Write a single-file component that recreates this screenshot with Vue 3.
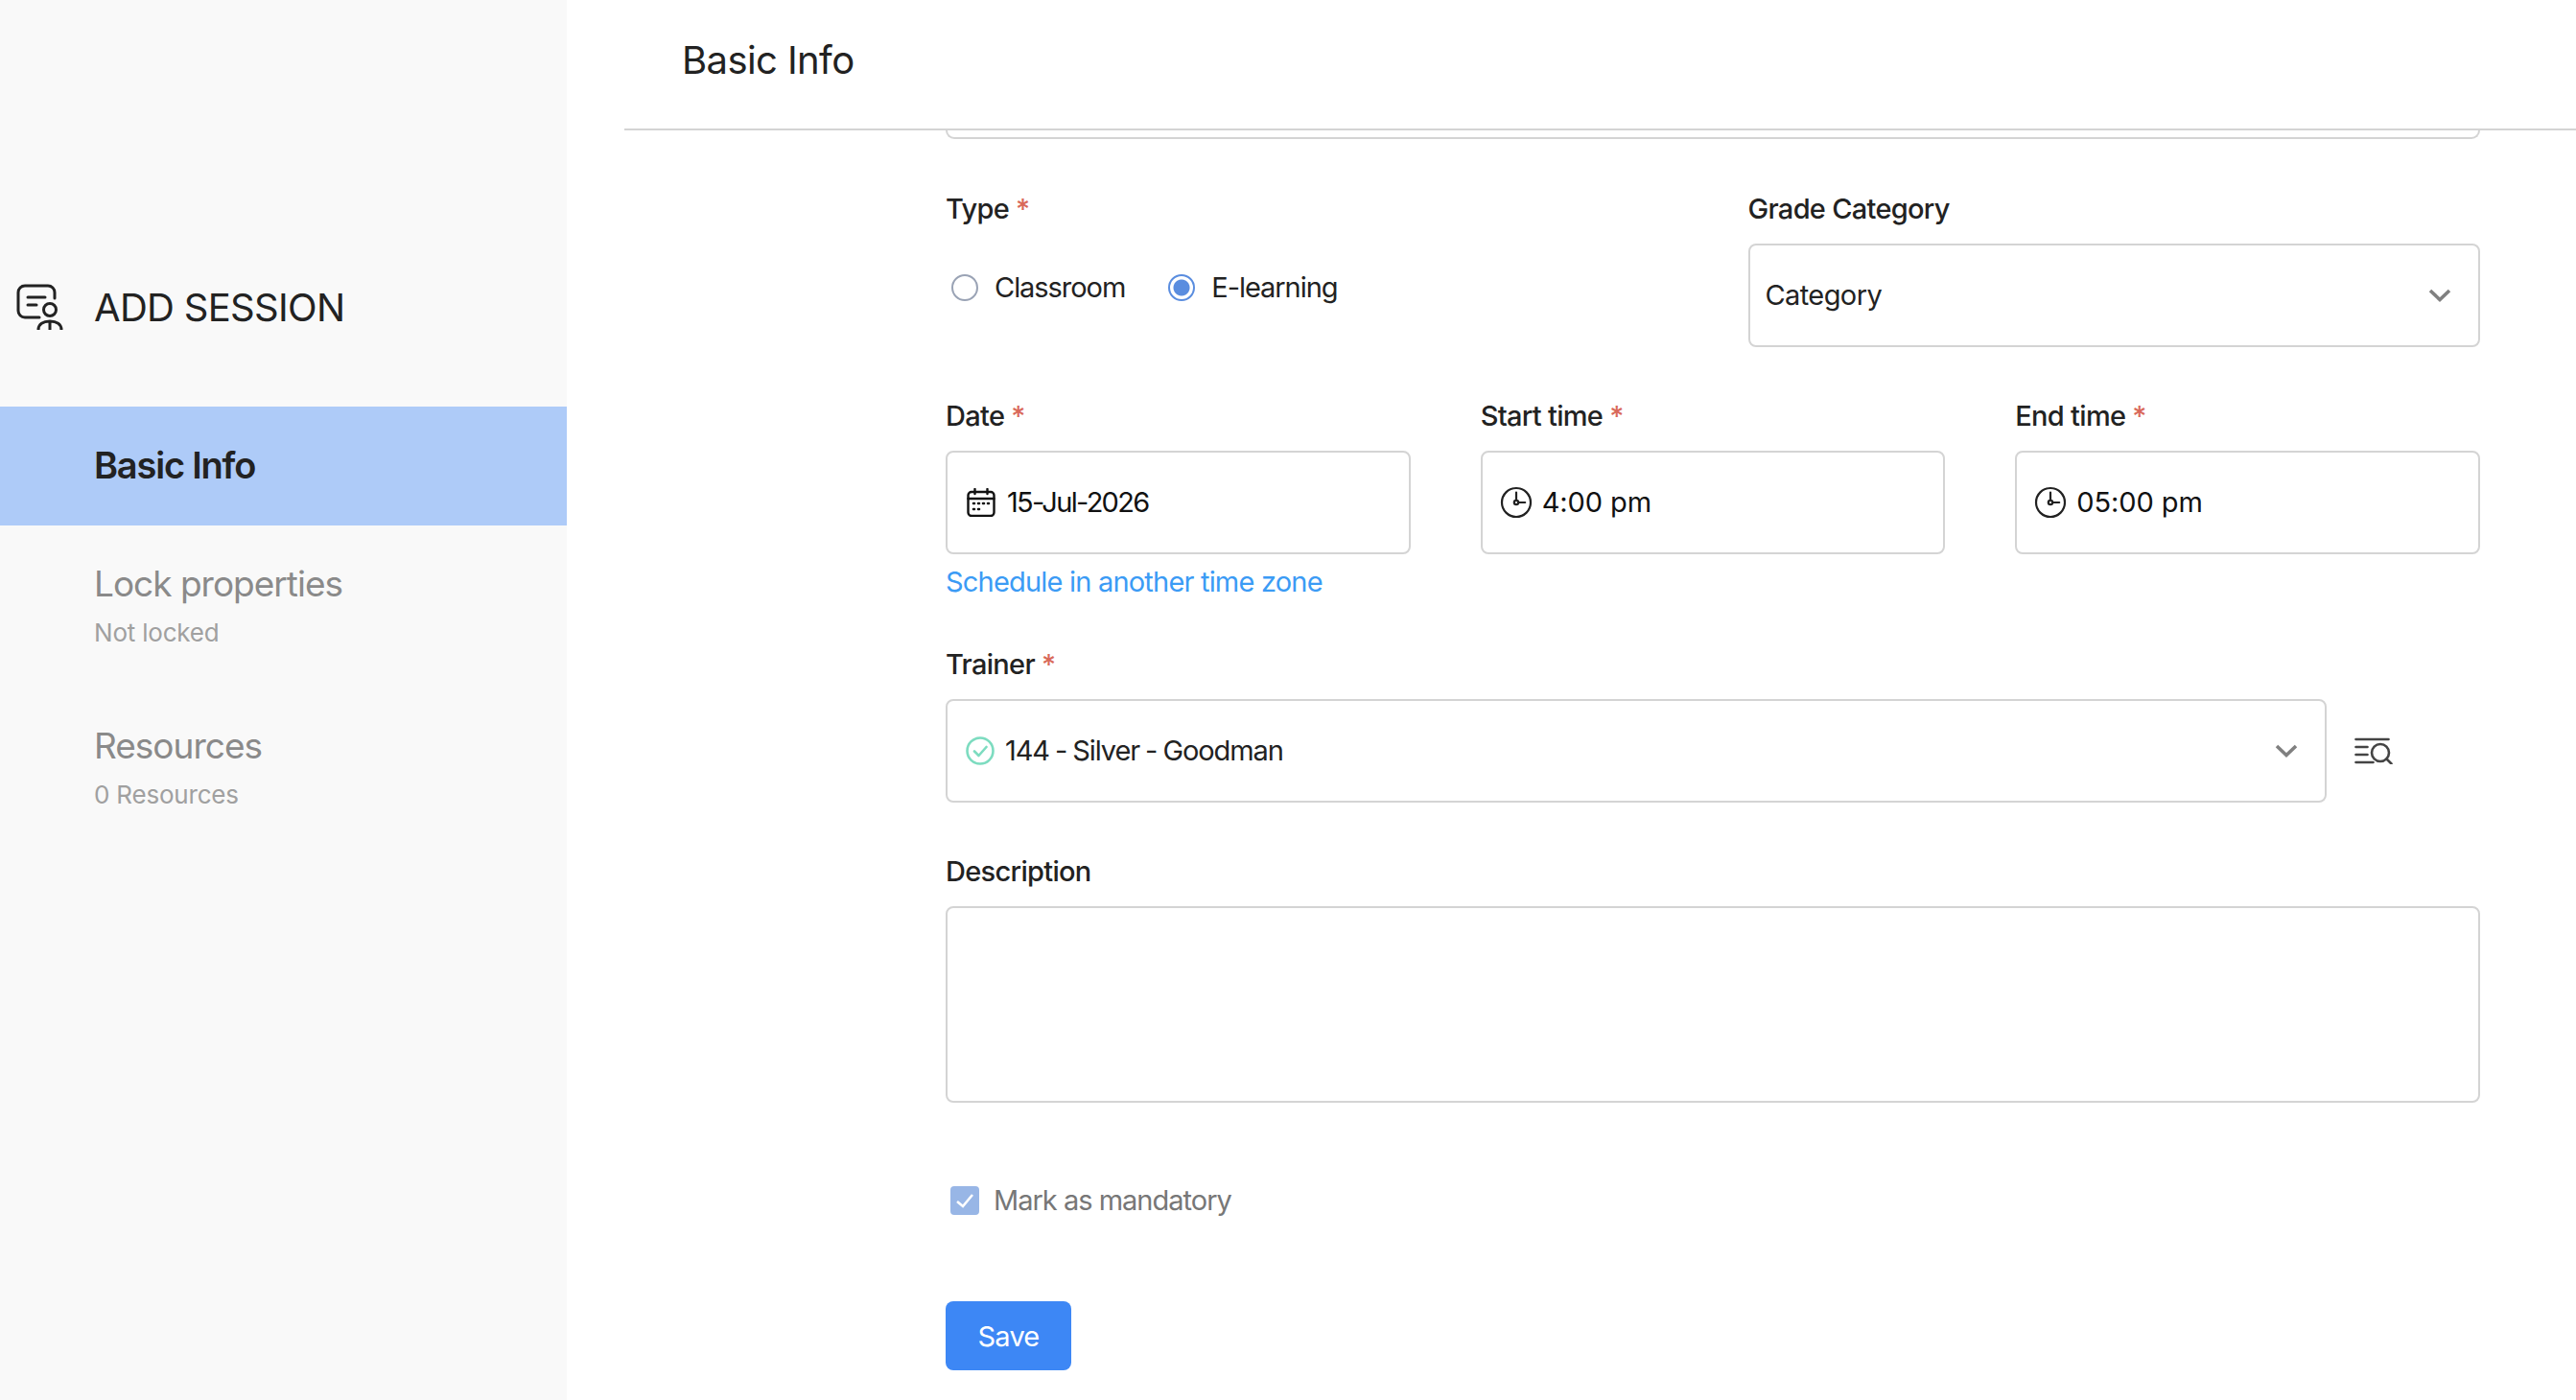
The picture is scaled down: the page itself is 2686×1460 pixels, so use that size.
<template>
  <div class="page">
    <aside class="sidebar">
      <div class="side-head">
        <svg class="head-icon" width="50" height="48" viewBox="0 0 50 48" fill="none" stroke="#222" stroke-width="3" stroke-linecap="round">
          <path d="M40 15V9a7 7 0 0 0-7-7H9a7 7 0 0 0-7 7v19a7 7 0 0 0 7 7h15" />
          <path d="M12 14h18M12 22h9" />
          <circle cx="35" cy="27" r="6.5" />
          <path d="M23 48c0-6 5-9 12-9s12 3 12 9M35 40v8" />
        </svg>
        <span class="head-title">ADD SESSION</span>
      </div>
      <div class="nav-item active">Basic Info</div>
      <div class="nav-item" v-for="item in navItems" :key="item.title">
        <div class="nav-title">{{ item.title }}</div>
        <div class="nav-sub">{{ item.sub }}</div>
      </div>
    </aside>

    <main class="main">
      <header class="main-head"><h1>Basic Info</h1></header>
      <form class="form" @submit.prevent>
        <div class="cut-field"></div>

        <div class="row two first">
          <div>
            <label class="label">Type <i>*</i></label>
            <div class="radios">
              <label class="radio" v-for="opt in types" :key="opt">
                <span class="dot" :class="{ on: opt === type }"></span>{{ opt }}
              </label>
            </div>
          </div>
          <div>
            <label class="label">Grade Category</label>
            <div class="field">
              <span class="value category">Category</span>
              <svg class="chev" width="24" height="14" viewBox="0 0 24 14" fill="none" stroke="#808080" stroke-width="3.6"><path d="M2 2l10 9.5L22 2" /></svg>
            </div>
          </div>
        </div>

        <div class="row three">
          <div>
            <label class="label">Date <i>*</i></label>
            <div class="field">
              <svg class="cal" width="30" height="30" viewBox="0 0 30 30" fill="none" stroke="#111" stroke-width="2.4" stroke-linecap="round">
                <rect x="1.5" y="4" width="27" height="25" rx="3.5" />
                <path d="M1.5 11h27M8.5 1v5M21.5 1v5" />
                <path d="M7 16h1M12 16h1M17 16h1M22 16h1M7 22h1M12 22h1" stroke-width="2.6" />
              </svg>
              <span class="value date">15-Jul-2026</span>
            </div>
            <a class="link">Schedule in another time zone</a>
          </div>
          <div>
            <label class="label">Start time <i>*</i></label>
            <div class="field">
              <svg class="clock" width="34" height="34" viewBox="0 0 34 34" fill="none" stroke="#222" stroke-width="2.2" stroke-linecap="round"><circle cx="17" cy="17" r="15" /><circle cx="17" cy="17" r="2.2" /><path d="M17 6.5v8.3M19.2 17h7" /></svg>
              <span class="value time">4:00 pm</span>
            </div>
          </div>
          <div>
            <label class="label">End time <i>*</i></label>
            <div class="field">
              <svg class="clock" width="34" height="34" viewBox="0 0 34 34" fill="none" stroke="#222" stroke-width="2.2" stroke-linecap="round"><circle cx="17" cy="17" r="15" /><circle cx="17" cy="17" r="2.2" /><path d="M17 6.5v8.3M19.2 17h7" /></svg>
              <span class="value time">05:00 pm</span>
            </div>
          </div>
        </div>

        <div class="trainer">
          <label class="label">Trainer <i>*</i></label>
          <div class="trainer-row">
            <div class="field">
              <svg class="check" width="30" height="30" viewBox="0 0 30 30" fill="none" stroke="#7ddcc0" stroke-width="2.6" stroke-linecap="round" stroke-linejoin="round"><circle cx="15" cy="15" r="13.5" /><path d="M9 15.5l4.5 4.5 8-9" /></svg>
              <span class="value person">144 - Silver - Goodman</span>
              <svg class="chev" width="24" height="14" viewBox="0 0 24 14" fill="none" stroke="#808080" stroke-width="3.6"><path d="M2 2l10 9.5L22 2" /></svg>
            </div>
            <svg class="lookup" width="40" height="28" viewBox="0 0 40 28" fill="none" stroke="#444" stroke-width="2.6" stroke-linecap="round">
              <path d="M1.5 2h34M1.5 10h12M1.5 18h12M1.5 26h18" />
              <circle cx="27" cy="16" r="9" />
              <path d="M33.5 22.5l5 5" />
            </svg>
          </div>
        </div>

        <div class="desc">
          <label class="label">Description</label>
          <div class="textarea"></div>
        </div>

        <label class="mandatory">
          <span class="box">
            <svg width="22" height="18" viewBox="0 0 22 18" fill="none" stroke="#fff" stroke-width="2.6"><path d="M3 10l6 5L19 3" /></svg>
          </span>
          Mark as mandatory
        </label>

        <button class="save" type="submit">Save</button>
      </form>
    </main>
  </div>
</template>

<script setup>
import { ref } from 'vue';

const navItems = [
  { title: 'Lock properties', sub: 'Not locked' },
  { title: 'Resources', sub: '0 Resources' },
];
const types = ['Classroom', 'E-learning'];
const type = ref('E-learning');
</script>

<style>
html, body {
  margin: 0;
  background: #fff;
  overflow: hidden;
}
</style>

<style scoped>
.page {
  display: flex;
  height: 1460px;
  overflow: hidden;
  font-family: Inter, "Noto Sans", sans-serif;
  color: #222;
}

.sidebar {
  width: 591px;
  flex: none;
  background: #f9f9f9;
}

.side-head {
  display: flex;
  align-items: center;
  height: 424px;
  padding: 216px 0 0 17px;
  box-sizing: border-box;
}

.head-icon {
  margin-right: 31px;
}

.head-title {
  font-size: 40px;
  letter-spacing: -0.7px;
}

.nav-item {
  padding: 0 0 78px 98px;
}

.nav-item.active {
  height: 124px;
  line-height: 122px;
  padding-bottom: 0;
  margin-bottom: 38px;
  background: #aecbf8;
  font-size: 38px;
  font-weight: 600;
  letter-spacing: -1.2px;
}

.nav-title {
  font-size: 37px;
  line-height: 46px;
  color: #8a8a8a;
  letter-spacing: -1px;
}

.nav-sub {
  margin-top: 11px;
  font-size: 26px;
  line-height: 34px;
  color: #a0a0a0;
  letter-spacing: -0.2px;
}

.main {
  flex: 1;
  padding-left: 60px;
}

.main-head {
  height: 125px;
  border-bottom: 2px solid #d4d4d4;
  display: flex;
  align-items: center;
  padding: 0 0 9px 60px;
}

h1 {
  margin: 0;
  font-size: 40px;
  font-weight: 400;
  letter-spacing: -0.6px;
}

.form {
  margin: 0 100px 0 335px;
}

.cut-field {
  height: 7px;
  border: 2px solid #d4d4d4;
  border-top: 0;
  border-radius: 0 0 10px 10px;
}

.label {
  display: block;
  font-size: 29px;
  line-height: 36px;
  font-weight: 500;
  letter-spacing: -0.7px;
  color: #222;
}

.label i {
  font-style: normal;
  color: #d9695a;
}

.row {
  display: grid;
  column-gap: 73px;
}

.row.two {
  grid-template-columns: 1fr 1fr;
}

.row.three {
  grid-template-columns: repeat(3, 1fr);
  margin-top: 54px;
}

.first {
  margin-top: 55px;
}

.row .label {
  margin-bottom: 18px;
}

.radios {
  display: flex;
  gap: 45px;
  margin-top: 46px;
  padding-left: 6px;
}

.radio {
  display: flex;
  align-items: center;
  font-size: 29px;
  line-height: 36px;
  letter-spacing: -1.05px;
}

.dot {
  width: 28px;
  height: 28px;
  border: 2px solid #9aa3b5;
  border-radius: 50%;
  box-sizing: border-box;
  margin-right: 17px;
  background: #fff;
}

.dot.on {
  border-color: #5a8ddf;
  background: radial-gradient(circle, #5a8ddf 0 8px, #fff 9px);
}

.field {
  height: 108px;
  box-sizing: border-box;
  border: 2px solid #d4d4d4;
  border-radius: 8px;
  display: flex;
  align-items: center;
  padding: 0 16px;
  background: #fff;
}

.value {
  font-size: 29px;
  color: #222;
  margin-top: -2px;
}

.category {
  letter-spacing: -0.6px;
}

.date {
  color: #111;
  letter-spacing: -1.7px;
}

.time {
  color: #111;
  letter-spacing: -0.1px;
}

.person {
  letter-spacing: -1.1px;
  word-spacing: -1px;
}

.chev {
  margin-left: auto;
  margin-right: 12px;
}

.cal {
  margin: 0 12px 0 4px;
}

.clock {
  margin: 0 10px 0 2px;
}

.check {
  margin: 0 11px 0 3px;
}

.link {
  display: block;
  margin-top: 11px;
  font-size: 29px;
  line-height: 36px;
  color: #3b9bf5;
  letter-spacing: -0.8px;
}

.trainer {
  margin-top: 50px;
}

.trainer .label {
  margin-bottom: 18px;
}

.trainer-row {
  display: flex;
  align-items: center;
}

.trainer-row .field {
  width: 1440px;
  flex: none;
}

.lookup {
  margin-left: 29px;
}

.desc {
  margin-top: 54px;
}

.desc .label {
  margin-bottom: 18px;
}

.textarea {
  height: 205px;
  box-sizing: border-box;
  border: 2px solid #d4d4d4;
  border-radius: 8px;
}

.mandatory {
  display: flex;
  align-items: center;
  margin-top: 84px;
  padding-left: 5px;
  font-size: 29px;
  line-height: 36px;
  color: #777;
  letter-spacing: -1px;
}

.box {
  width: 30px;
  height: 30px;
  border-radius: 4px;
  background: #98b6e6;
  display: flex;
  align-items: center;
  justify-content: center;
  margin-right: 15px;
}

.save {
  display: block;
  width: 131px;
  height: 72px;
  margin-top: 87px;
  border: 0;
  border-radius: 8px;
  background: #3d87f5;
  color: #fff;
  font-family: inherit;
  font-size: 29px;
  letter-spacing: -0.8px;
}
</style>
